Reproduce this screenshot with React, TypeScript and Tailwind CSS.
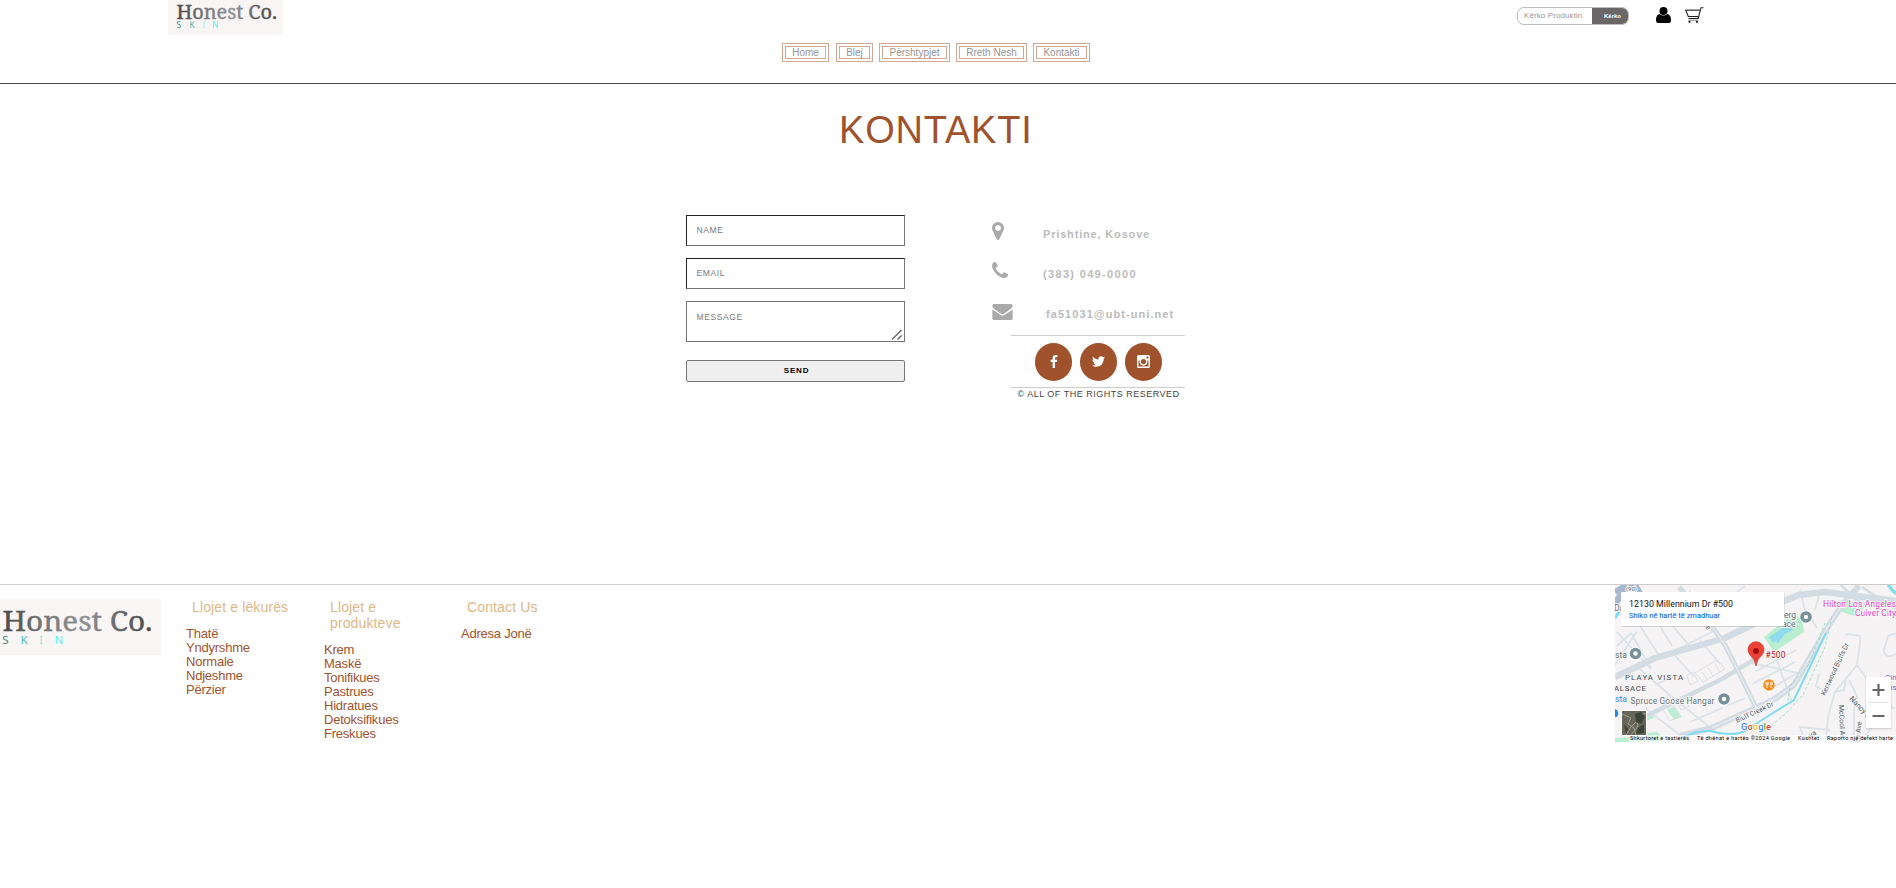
import type { ReactNode } from "react";

const PIN = "M768 640q0-106-75-181t-181-75-181 75-75 181 75 181 181 75 181-75 75-181zm256 0q0 109-33 179l-364 774q-16 33-47.5 52t-67.5 19-67.5-19-46.5-52l-365-774q-33-70-33-179 0-212 150-362t362-150 362 150 150 362z";
const PHONE = "M1408 1240q0 27-10 70.5t-20.5 68.5q-21 50-122 106-94 51-186 51-27 0-52.5-3.5t-57.5-12.5-47.5-14.5-55.5-20.5-49-18q-98-35-175-83-128-79-264.5-215.5t-215.5-264.5q-48-77-83-175-3-9-18-49t-20.5-55.5-14.5-47.5-12.5-57.5-3.5-52.5q0-92 51-186 56-101 106-122 25-10 68.5-20.5t70.5-10.5q14 0 21 3 18 6 53 76 11 19 30 54t35 63.5 31 53.5q3 4 17.5 25t21.5 35.5 7 28.5q0 20-28.5 50t-62 55-62 53-28.5 46q0 9 5 22.5t8.5 20.5 14 24 11.5 19q76 137 174 235t235 174q2 1 19 11.5t24 14 20.5 8.5 22.5 5q18 0 46-28.5t53-62 55-62 50-28.5q14 0 28.5 7t35.5 21.5 25 17.5q25 15 53.5 31t63.5 35 54 30q70 35 76 53 3 7 3 21z";
const MAIL = "M1792 710v794q0 66-47 113t-113 47h-1472q-66 0-113-47t-47-113v-794q44 49 101 87 362 246 497 345 57 42 92.5 65.5t94.5 48 110 24.5h2q51 0 110-24.5t94.5-48 92.5-65.5q170-123 498-345 57-39 100-87zm0-294q0 79-49 151t-122 123q-376 261-468 325-10 7-42.5 31t-54 38.5-52 32.5-57.5 27-50 9h-2q-23 0-50-9t-57.5-27-52-32.5-54-38.5-42.5-31q-91-64-262-182.5t-205-142.5q-62-42-117-115.5t-55-136.5q0-78 41.5-130t118.5-52h1472q65 0 112.5 47t47.5 113z";
const FACEBOOK = "M1343 12v264h-157q-86 0-116 36t-30 108v189h293l-39 296h-254v759h-306v-759h-255v-296h255v-218q0-186 104-288.5t277-102.5q147 0 228 12z";
const TWITTER = "M1684 408q-67 98-162 167 1 14 1 42 0 130-38 259.5t-115.5 248.5-184.5 210.5-258 146-323 54.5q-271 0-496-145 35 4 78 4 225 0 401-138-105-2-188-64.5t-114-159.5q33 5 61 5 43 0 85-11-112-23-185.5-111.5t-73.5-205.5v-4q68 38 146 41-66-44-105-115t-39-154q0-88 44-163 121 149 294.5 238.5t371.5 99.5q-8-38-8-74 0-134 94.5-228.5t228.5-94.5q140 0 236 102 109-21 205-78-37 115-142 178 93-10 186-50z";

function Logo({ className, width, height, left, right, baseline, size, skinX, skinBaseline, skinSize }: {
  className: string; width: number; height: number; left: number; right: number; baseline: number; size: number;
  skinX: number[]; skinBaseline: number; skinSize: number;
}) {
  const gradient = `word-${width}`;
  const colors = ["#3f8c89", "#4fb8b1", "#a5e8e5", "#4df5f2"];
  return (
    <svg viewBox={`0 0 ${width} ${height}`} className={className}>
      <defs>
        <linearGradient id={gradient} x1="0" x2="1">
          <stop offset="0" stopColor="#484848" />
          <stop offset=".28" stopColor="#747678" />
          <stop offset=".55" stopColor="#909395" />
          <stop offset=".8" stopColor="#606264" />
          <stop offset="1" stopColor="#484848" />
        </linearGradient>
      </defs>
      <rect width={width} height={height} fill="#faf5f5" />
      <text x={left} y={baseline} textLength={right - left} lengthAdjust="spacingAndGlyphs" fontFamily="'Noto Serif','DejaVu Serif','Liberation Serif',serif" fontSize={size} fill={`url(#${gradient})`} stroke={`url(#${gradient})`} strokeWidth=".4">Honest Co.</text>
      <g fontFamily="'Noto Sans',sans-serif" fontSize={skinSize}>
        {["S", "K", "I", "N"].map((letter, i) => (
          <text key={letter} x={skinX[i]} y={skinBaseline} fill={colors[i]}>{letter}</text>
        ))}
      </g>
    </svg>
  );
}

const nav = [
  { label: "Home", width: "w-[47px]" },
  { label: "Blej", width: "w-[37px]" },
  { label: "Përshtypjet", width: "w-[71px]" },
  { label: "Rreth Nesh", width: "w-[71px]" },
  { label: "Kontakti", width: "w-[57px]" },
];

function Social({ children }: { children: ReactNode }) {
  return <a className="flex h-[38px] w-[37px] items-center justify-center rounded-full bg-[#a0522d] pb-0.5 text-white">{children}</a>;
}

function FooterColumn({ title, items, className }: { title: string; items: string[]; className: string }) {
  return (
    <div className={className}>
      <h3 className="pl-1.5 text-[14px] leading-4 tracking-[.13px] text-[#deb887]">{title}</h3>
      <ul className="mt-3 text-[13px] leading-[14px] tracking-[-.22px] text-[#a0522d]">
        {items.map((item) => <li key={item}>{item}</li>)}
      </ul>
    </div>
  );
}

function GreyMarker({ x, y }: { x: number; y: number }) {
  return (
    <g>
      <path d={`M${x - 6.5} ${y}a6.5 6.5 0 1 1 13 0q0 4-6.5 9q-6.5-5-6.5-9`} fill="#fff" />
      <circle cx={x} cy={y} r="5.8" fill="#78909c" />
      <circle cx={x} cy={y} r="2.2" fill="#fff" />
    </g>
  );
}

function StreetMap() {
  return (
    <svg viewBox="1615 585 281 157" className="h-[157px] w-[281px]" fontFamily="Roboto,sans-serif">
      <rect x="1615" y="585" width="281" height="157" fill="#f5f3f3" />
      <g fill="#b9eed0">
        <path d="M1764 637l30-23 8 5 2 13-30 20z" />
        <path d="M1836 610l5-10 24 5-7 12z" />
        <path d="M1645 716l8-3 1 5-8 3zM1615 738l20-1 10-4 12-1 6 5-3 5h-45zM1667 709l8-2 7 10-8 3z" />
      </g>
      <path d="M1769 637l5-3 4 5-5 4zM1775 633l14-9 4 6-8 4-7 9-4-3z" fill="#90daee" />
      <g fill="none" stroke="#dce3e8" strokeWidth="1.800">
        <path d="M1617 632l34 37M1617 646l14-13 20 35M1615 665l22-34M1660 657l-20-31M1672 652l40-20-14-16M1672 652l22 25M1700 640l20 24M1672 697l50 40M1672 697l-37-32M1655 685l18-9M1690 722l55-24M1645 708l36 28" />
        <path d="M1715 608l30-22M1745 628l-30-20M1672 625l20 24M1775 655l17 47M1752 663l46 10M1756 671l40-21M1752 684l43-22M1765 692l34-20M1660 626l12 20M1690 590l-10 35M1800 590l5 20 12 18M1820 592l-5 18" />
        <path d="M1845 635l2-1 13 2v8l-3 21-22 27-7 25-2 25M1835 692l9-2 2-12M1857 665l17 24 20 20M1849 680l8 16-3 14v32M1822 690l-6-4 3-12M1896 654q-11 6-12-4l4-14 8-3M1878 720l-18 22M1805 742l-5-15 30 3" />
      </g>
      <g fill="none" stroke="#d3dce3">
        <path d="M1615 677l40-19 70-20 27-13 27-22 20-8 26-3 71 9" strokeWidth="6.500" />
        <path d="M1859 586l-17 19-13 20-20 34-15 26-19 14-63 29-32 8" strokeWidth="6" />
        <path d="M1640 719l82-40 30-18 5-12" strokeWidth="4.500" />
        <path d="M1679 587l30 35 16 23 17 34 17 35" strokeWidth="5" />
        <path d="M1841 585l15 15 40 15M1862 587l34 22" strokeWidth="2.500" />
        <path d="M1615 592l12-7h8l18 30" stroke="#a5b7cd" strokeWidth="6" />
        <path d="M1615 603l16-20" stroke="#a5b7cd" strokeWidth="7" />
      </g>
      <g fill="none" stroke="#f1f2f3" strokeWidth="1">
        <path d="M1842 605l-13 20-20 34-15 26-19 14-63 29" />
        <path d="M1709 622l16 23 17 34 17 35" />
      </g>
      <g fill="none" stroke="#dce0e3">
        <path d="M1695 673l22-13 8 9-22 13zM1687 675l6-3 5 9-8 4zM1702 672l5 7M1708 668l5 8M1715 664l5 8M1662 708l9-5 8 13-9 5zM1677 702l7-4 5 8-8 4z" />
      </g>
      <path d="M1682 738q15-8 28-7 24 6 35 0l20-13 29-18 32-67" fill="none" stroke="#7ddcf2" strokeWidth="2" />
      <path d="M1888 585l8 9M1615 618l4-6" stroke="#7ddcf2" strokeWidth="3" />
      <path d="M1832 617l-7 30-22 48-20 21-24 20M1825 623l-17 43-18 20-2 15" stroke="#91d9b5" strokeWidth=".8" strokeDasharray="3 2" fill="none" />
      <g fontSize="8" fill="#607078" stroke="#f7f7f7" strokeWidth="2" paintOrder="stroke">
        <text x="1784" y="618" fontSize="8.5">erg</text>
        <text x="1782" y="627" fontSize="8.5">ace</text>
        <text x="1615" y="658" fontSize="8.5">sta</text>
        <text x="1615" y="702" fontSize="8.5" fill="#1e88e5">sta</text>
        <text x="1630.5" y="704" fontSize="8.5" textLength="84">Spruce Goose Hangar</text>
        <text x="1626" y="591" fontSize="6">(90)</text>
        <text x="1614" y="611" fontSize="8.5">Da</text>
        <text x="1625" y="679.5" textLength="58" fill="#3f4448" fontSize="7.8" strokeWidth="1">PLAYA VISTA</text>
        <text x="1614" y="691" textLength="32" fill="#3f4448" fontSize="7.8" strokeWidth="1">ALSACE</text>
        <text transform="translate(1737 723) rotate(-25)" textLength="41" fontSize="7" fill="#4d5a63">Bluff Creek Dr</text>
        <text transform="translate(1825 696) rotate(-65)" textLength="57" fontSize="7" fill="#4d5a63">Kentwood Bluffs Dr</text>
        <text transform="translate(1849 699) rotate(47)" fontSize="7.5" fill="#4d5a63">Nancy St</text>
        <text transform="translate(1839 705) rotate(88)" fontSize="7" fill="#4d5a63">McCool Av</text>
        <text transform="translate(1860 742) rotate(-86)" fontSize="7" fill="#4d5a63">by Ave</text>
        <text transform="translate(1703 625) rotate(50)" fontSize="7" fill="#4d5a63">ve</text>
        <text x="1811" y="738" transform="rotate(-35 1811 738)" fontSize="7" fill="#4d5a63">va</text>
        <text x="1896" y="607" textAnchor="end" textLength="73" fontSize="8.5" fill="#e83dc6">Hilton Los Angeles</text>
        <text x="1896" y="615.5" textAnchor="end" textLength="41" fontSize="8.5" fill="#e83dc6">Culver City</text>
        <text x="1885" y="680" fontSize="8" fill="#7e57c2">Cin</text>
        <text x="1888" y="690" fontSize="8" fill="#7e57c2">as</text>
        <text x="1765.500" y="657.500" textLength="20" fontSize="8.5" fill="#b31412">#500</text>
      </g>
      <GreyMarker x={1635.5} y={653.5} />
      <GreyMarker x={1724} y={699} />
      <GreyMarker x={1806} y={617} />
      <path d="M1756 666q-1-7-6-11a8 8 0 1 1 12 0q-5 4-6 11" fill="#ea4335" stroke="#c5221f" strokeWidth=".6" />
      <circle cx="1756" cy="651" r="3" fill="#a50e0e" />
      <path d="M1762.500 685a6.500 6.500 0 1 1 13 0q0 4-6.500 9q-6.500-5-6.500-9" fill="#fff" />
      <circle cx="1769" cy="685" r="5.800" fill="#f98a1c" />
      <path d="M1767 682v6M1765.800 682v2.500h2.400V682M1771 682v6M1771 682.500h1.200v2.500H1771" stroke="#fff" strokeWidth=".9" fill="none" />
      <path d="M1615 709a4.500 4.500 0 0 1 1.500 8h-1.500z" fill="#1e88e5" />
      <rect x="1621.500" y="592.500" width="163" height="34.500" rx="1" fill="#a8a8a8" opacity=".45" />
      <rect x="1621" y="592" width="163" height="34" rx="1" fill="#fff" />
      <text x="1629" y="607" textLength="104" lengthAdjust="spacingAndGlyphs" fontSize="9" fill="#111">12130 Millennium Dr #500</text>
      <text x="1629" y="618" textLength="91" lengthAdjust="spacingAndGlyphs" fontSize="7.700" fill="#1a73e8" stroke="#1a73e8" strokeWidth=".15">Shiko në hartë të zmadhuar</text>
      <rect x="1621.500" y="710.500" width="25" height="25" fill="#66675a" stroke="#fff" />
      <path d="M1622 714l9 4-3 6 6 4 2 7M1646 713l-10 5 2 8-7 9M1626 735l5-8 8-8" stroke="#a09d8a" strokeWidth="1" fill="none" />
      <path d="M1635 714l6-2 4 5-4 7-5-2zM1624 724l4 5-2 5M1638 728l6-4v9l-8 1z" fill="#3d4339" />
      <rect x="1865.500" y="677.500" width="26" height="52" rx="1" fill="#aaa" opacity=".4" />
      <rect x="1866" y="677" width="25" height="51" rx="1" fill="#fff" />
      <path d="M1868 702.500h20" stroke="#e0e0e0" />
      <path d="M1872.500 690h12M1878.500 684v12M1872.500 716h12" stroke="#666" strokeWidth="2.200" />
      <rect x="1629" y="735" width="267" height="7" fill="#fff" opacity=".6" />
      <text x="1741" y="730" fontSize="9.500" fontWeight="500" stroke="#fff" strokeWidth="1.500" paintOrder="stroke" textLength="30">
        <tspan fill="#4285f4">G</tspan><tspan fill="#ea4335">o</tspan><tspan fill="#fbbc04">o</tspan><tspan fill="#4285f4">g</tspan><tspan fill="#34a853">l</tspan><tspan fill="#ea4335">e</tspan>
      </text>
      <g fontSize="5.500" fill="#000">
        <text x="1630" y="739.500" textLength="59">Shkurtoret e tastierës</text>
        <text x="1697" y="739.500" textLength="93">Të dhënat e hartës ©2024 Google</text>
        <text x="1798" y="739.500" textLength="21">Kushtet</text>
        <text x="1827" y="739.500" textLength="66">Raporto një defekt harte</text>
      </g>
    </svg>
  );
}

export default function App() {
  return (
    <div className="min-h-[888px] w-full overflow-hidden bg-white font-['Liberation_Sans',Arial,sans-serif]">
      <header className="h-[84px] border-b border-[#444]">
        <div className="flex h-[43px] items-start">
          <Logo className="ml-[168px] h-[35px] w-[115px]" width={115} height={35} left={8.5} right={109} baseline={18.7} size={19} skinX={[8.5, 21.5, 34.5, 44]} skinBaseline={27.8} skinSize={8.3} />
          <div className="mt-[7px] ml-auto flex h-[18px] w-[112px] overflow-hidden rounded-[7px] border border-[#bbb] bg-white text-[8px]">
            <span className="w-[74px] pl-1.5 leading-4 tracking-[.1px] whitespace-nowrap text-[#999]">Kërko Produktin</span>
            <button className="-my-px -mr-px grow bg-[#6b6768] pl-1 text-[6px] font-bold text-white">Kërko</button>
          </div>
          <svg viewBox="0 0 15 16" className="mt-[7px] ml-[27px] h-4 w-[15px]">
            <circle cx="7.500" cy="4" r="4" />
            <path d="M3.500 7Q0 8 0 13q0 3 2 3h11q2 0 2-3 0-5-3.500-6-4 3-8 0" />
          </svg>
          <svg viewBox="0 0 19 16" className="mt-[7px] mr-[192px] ml-[14px] h-4 w-[19px]" fill="none" stroke="#222" strokeWidth="1.100">
            <path d="M18.500.7h-2.500L13.200 11.500H3.500" />
            <path d="M15 3.300H.7L3.300 9.500h10" />
            <path d="M1 2.700h14" stroke="#888" strokeWidth=".7" />
            <path d="M3.300 13.200h10" strokeWidth=".8" stroke="#666" />
            <circle cx="4.500" cy="14.800" r=".6" />
            <circle cx="12" cy="14.800" r=".6" />
          </svg>
        </div>
        <nav className="ml-[782px] flex gap-1.5 text-[10px] text-[#949494]">
          {nav.map(({ label, width }) => (
            <a key={label} className={`flex h-[19px] items-center justify-center border-4 border-double border-[#d2a893] leading-none whitespace-nowrap first:mr-px ${width}`}>{label}</a>
          ))}
        </nav>
      </header>

      <main className="h-[500px] pt-6">
        <h1 className="ml-[839px] text-[38px] leading-[44px] tracking-[.8px] text-[#a0522d]">KONTAKTI</h1>
        <div className="mt-[63px] ml-[686px] flex">
          <form className="flex w-[219px] flex-col text-[8.5px] tracking-[.6px]">
            <input placeholder="NAME" className="h-[31px] border border-[#767676] border-t-[#222] border-l-[#222] px-[9.5px] pb-0.5 placeholder:text-[#777]" />
            <input placeholder="EMAIL" className="mt-3 h-[31px] border border-[#767676] border-t-[#222] border-l-[#222] px-[9.5px] pb-0.5 placeholder:text-[#777]" />
            <div className="mt-3 flex h-[41px] justify-between border border-[#767676] pt-[10px] pl-[9.5px] leading-[10px] text-[#777]">
              MESSAGE
              <svg viewBox="0 0 10 10" className="mt-[18px] mr-0.5 h-2.5 w-2.5" stroke="#555" strokeWidth="1.200"><path d="M0 9.500L9.500 0M5.500 9.500L9.500 5.500" /></svg>
            </div>
            <button className="mt-[18px] h-[22px] rounded-[2px] border border-[#767676] bg-[#efefef] pb-px pl-0.5 text-[8px] font-bold tracking-[.8px] text-black">SEND</button>
          </form>

          <div className="ml-[87px] w-[194px]">
            <ul className="text-[11px] font-bold text-[#bbb]">
              <li className="flex h-10">
                <svg viewBox="0 128 1024 1536" className="mt-[7px] h-[18px] w-3 fill-[#aaa]"><path d={PIN} /></svg>
                <span className="mt-[11px] ml-[39px] leading-4 tracking-[.83px]">Prishtine, Kosove</span>
              </li>
              <li className="flex h-10">
                <svg viewBox="0 128 1408 1408" className="mt-[7px] h-4 w-4 fill-[#aaa]"><path d={PHONE} /></svg>
                <span className="mt-[11px] ml-[35px] leading-4 tracking-[1.33px]">(383) 049-0000</span>
              </li>
              <li className="flex h-10">
                <svg viewBox="0 256 1792 1408" className="mt-[9px] h-[16px] w-[21px] fill-[#aaa]"><path d={MAIL} /></svg>
                <span className="mt-[11px] ml-[33px] leading-4 tracking-[1.07px]">fa51031@ubt-uni.net</span>
              </li>
            </ul>
            <div className="ml-[19px] flex h-[53px] w-[174px] justify-center gap-2 border-y border-[#ccc] pt-[7px] pl-px">
              <Social><svg viewBox="479 0 864 1664" className="h-[13px] w-[8px] fill-white"><path d={FACEBOOK} /></svg></Social>
              <Social><svg viewBox="108 256 1576 1280" className="h-[11px] w-[13px] fill-white"><path d={TWITTER} /></svg></Social>
              <Social>
                <svg viewBox="0 0 13 13" className="h-[13px] w-[13px]">
                  <path fill="#fff" fillRule="evenodd" d="M1.500 0h10Q13 0 13 1.500v10q0 1.500-1.500 1.500h-10Q0 13 0 11.500v-10Q0 0 1.500 0zM1.500 5.500v5.500q0 .5.500.5h9q.5 0 .5-.500V5.500h-1.200a4 4 0 1 1-7.600 0zM9.500 1.500v2h2v-2zM6.500 4a2.600 2.600 0 1 0 0 5.200a2.600 2.600 0 0 0 0-5.200z" />
                </svg>
              </Social>
            </div>
            <p className="ml-[25.5px] text-[9px] leading-[12px] tracking-[.5px] whitespace-nowrap text-[#444]">© ALL OF THE RIGHTS RESERVED</p>
          </div>
        </div>
      </main>

      <footer className="flex h-[159px] items-start border-t border-[#ccc]">
        <Logo className="mt-3.5 h-[56px] w-[161px]" width={161} height={56} left={2.5} right={152.5} baseline={32} size={27.5} skinX={[2.3, 20.5, 39, 54.5]} skinBaseline={45} skinSize={11.5} />
        <FooterColumn className="mt-3.5 ml-[25px] w-[112px]" title="Llojet e lëkurës" items={["Thatë", "Yndyrshme", "Normale", "Ndjeshme", "Përzier"]} />
        <FooterColumn className="mt-3.5 ml-[26px] w-[90px]" title="Llojet e produkteve" items={["Krem", "Maskë", "Tonifikues", "Pastrues", "Hidratues", "Detoksifikues", "Freskues"]} />
        <FooterColumn className="mt-3.5 ml-[47px] w-[112px]" title="Contact Us" items={["Adresa Jonë"]} />
        <div className="ml-auto"><StreetMap /></div>
      </footer>
    </div>
  );
}
